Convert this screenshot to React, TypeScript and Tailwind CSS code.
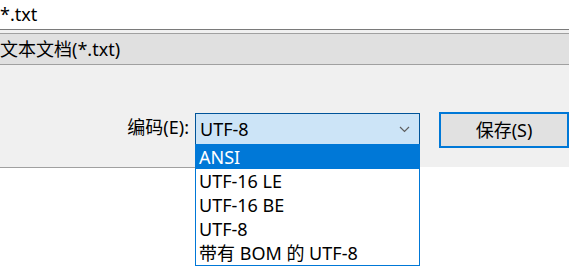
import React from 'react';

const font = { fontFamily: '"Noto Sans", "Noto Sans CJK SC", sans-serif' };

const options = ['ANSI', 'UTF-16 LE', 'UTF-16 BE', 'UTF-8', '带有 BOM 的 UTF-8'];

export default function App() {
  return (
    <div className="relative w-[569px] h-[268px] bg-white text-[18px] text-black overflow-hidden" style={font}>
      {/* file name field */}
      <div className="h-[29px] flex items-center leading-none">
        <span className="-mt-[2px]">*.txt</span>
      </div>
      <div className="h-px bg-[#7a7a7a]" />
      <div className="h-[3px] bg-[#f0f0f0]" />

      {/* file type row */}
      <div className="h-[32px] bg-[#e0e0e0] border-y border-[#a0a0a0] flex items-center leading-none">
        <span className="-mt-[1px]">文本文档(*.txt)</span>
      </div>

      {/* encoding / save row */}
      <div className="h-[102px] bg-[#f0f0f0] flex justify-end items-start pt-[47px]">
        <span className="mt-[6px] mr-[6px] leading-none">编码(E):</span>
        <div className="relative mt-[1px] w-[225px] h-[32px] bg-[#cce4f7] border border-[#005499] flex items-center pl-[4px] leading-none">
          <span className="-mt-[1px]">UTF-8</span>
          <svg className="absolute right-[9px] top-[12px]" width="11" height="7" viewBox="0 0 11 7">
            <path d="M1 1 L5.5 5.5 L10 1" fill="none" stroke="#5f5f5f" strokeWidth="1.2" />
          </svg>
        </div>
        <button className="ml-[19px] w-[130px] h-[36px] bg-[#e1e1e1] border-2 border-[#0078d7] flex items-center justify-center leading-none">
          <span className="-mt-[1px]">保存(S)</span>
        </button>
      </div>
      <div className="h-px bg-[#a0a0a0] w-[195px]" />

      {/* dropdown list */}
      <ul className="absolute left-[195px] top-[144px] w-[225px] bg-white border border-[#0078d7] leading-none">
        {options.map((o, i) => (
          <li
            key={o}
            className={
              'h-[24px] flex items-center pl-[3px] ' +
              (i === 0 ? 'bg-[#0078d7] text-white' : 'text-black')
            }
          >
            <span className="-mt-[1px]">{o}</span>
          </li>
        ))}
      </ul>
    </div>
  );
}
